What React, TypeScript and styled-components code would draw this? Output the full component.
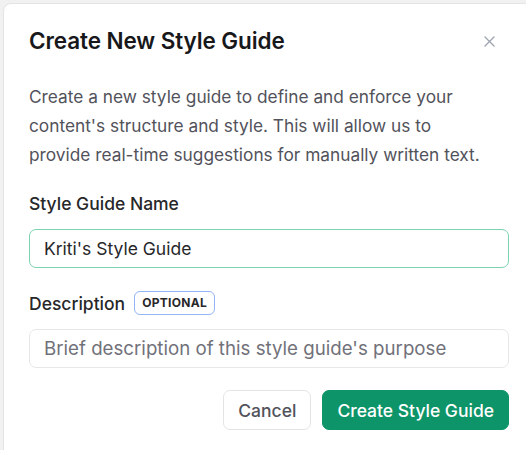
import React from 'react';
import styled, { createGlobalStyle } from 'styled-components';

const GlobalStyle = createGlobalStyle`
  html, body {
    margin: 0;
    padding: 0;
    background: #f1f1f2;
    font-family: Inter, 'Liberation Sans', sans-serif;
    overflow: hidden;
  }
  * {
    box-sizing: border-box;
  }
`;

const Page = styled.div`
  width: 526px;
  height: 450px;
  padding: 3px 0 0 3px;
  overflow: hidden;
`;

const Dialog = styled.section`
  width: 540px;
  height: 470px;
  background: #fff;
  border: 1px solid #e4e4e7;
  border-radius: 8px;
  padding: 23px 32px 0 25px;
  display: flex;
  flex-direction: column;
`;

const Header = styled.div`
  display: flex;
  align-items: center;
  justify-content: space-between;
  width: 480px;
`;

const Title = styled.h2`
  margin: 0;
  font-size: 22.5px;
  font-weight: 600;
  line-height: 28px;
  color: #18181b;
  letter-spacing: -0.1px;
`;

const CloseButton = styled.button`
  width: 20px;
  height: 20px;
  margin-right: 10px;
  padding: 0;
  border: none;
  background: transparent;
  display: flex;
  align-items: center;
  justify-content: center;
  color: #9ca3af;
  cursor: pointer;
`;

const Intro = styled.p`
  margin: 27px 0 0;
  width: 465px;
  font-size: 17.3px;
  line-height: 29px;
  color: #52525b;
`;

const Field = styled.div<{ $top: number }>`
  margin-top: ${(p) => p.$top}px;
  width: 480px;
  display: flex;
  flex-direction: column;
  gap: 14px;
`;

const LabelRow = styled.div`
  display: flex;
  align-items: center;
  gap: 9px;
  height: 24px;
`;

const Label = styled.label`
  font-size: 17.5px;
  font-weight: 500;
  color: #27272a;
`;

const Badge = styled.span`
  font-size: 12px;
  font-weight: 700;
  letter-spacing: 0.3px;
  color: #27272a;
  border: 1px solid #93b4f5;
  border-radius: 6px;
  padding: 0 7px;
  height: 24px;
  line-height: 22px;
`;

const Input = styled.input<{ $focused?: boolean }>`
  width: 100%;
  height: 39px;
  padding: 0 14px;
  border: 1px solid ${(p) => (p.$focused ? '#7dd3b0' : '#e7e7ea')};
  border-radius: 7px;
  font-family: inherit;
  font-size: 17.5px;
  color: #27272a;
  outline: none;
  background: #fff;

  &::placeholder {
    color: #71717a;
    font-size: 18.7px;
  }
`;

const Actions = styled.div`
  margin-top: 22px;
  width: 480px;
  display: flex;
  justify-content: flex-end;
  gap: 11px;
`;

const Button = styled.button<{ $primary?: boolean }>`
  height: 40px;
  padding: 0 14px;
  border-radius: 7px;
  font-family: inherit;
  font-size: 17.5px;
  font-weight: 500;
  cursor: pointer;
  border: 1px solid ${(p) => (p.$primary ? '#0d9468' : '#e4e4e7')};
  background: ${(p) => (p.$primary ? '#0d9468' : '#fff')};
  color: ${(p) => (p.$primary ? '#fff' : '#52525b')};
`;

export default function App() {
  return (
    <Page>
      <GlobalStyle />
      <Dialog>
        <Header>
          <Title>Create New Style Guide</Title>
          <CloseButton aria-label="Close">
            <svg width="11" height="11" viewBox="0 0 11 11" fill="none">
              <path d="M1 1l9 9M10 1l-9 9" stroke="currentColor" strokeWidth="1.3" strokeLinecap="round" />
            </svg>
          </CloseButton>
        </Header>
        <Intro>
          Create a new style guide to define and enforce your content's structure and style. This will
          allow us to provide real-time suggestions for manually written text.
        </Intro>
        <Field $top={22}>
          <LabelRow>
            <Label>Style Guide Name</Label>
          </LabelRow>
          <Input $focused defaultValue="Kriti's Style Guide" />
        </Field>
        <Field $top={23}>
          <LabelRow>
            <Label>Description</Label>
            <Badge>OPTIONAL</Badge>
          </LabelRow>
          <Input placeholder="Brief description of this style guide's purpose" />
        </Field>
        <Actions>
          <Button>Cancel</Button>
          <Button $primary>Create Style Guide</Button>
        </Actions>
      </Dialog>
    </Page>
  );
}
